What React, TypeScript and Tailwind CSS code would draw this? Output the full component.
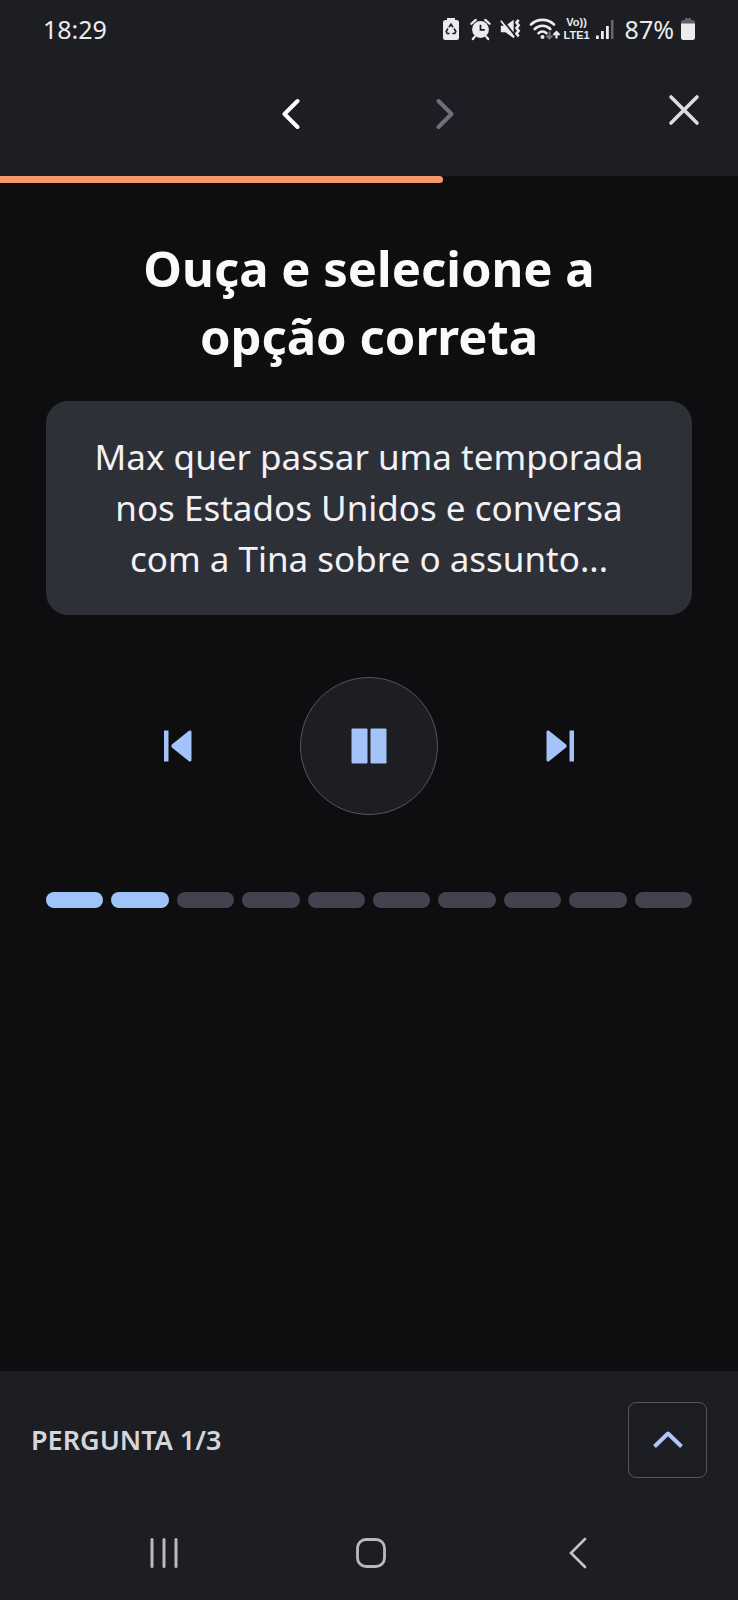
const SEGMENTS = 10;
const PLAYED = 2;

function StatusBar() {
  return (
    <div className="flex h-[58px] items-center justify-between pl-[43px] pr-[42px] text-[25px] leading-8 text-[#ececee]">
      <time>18:29</time>
      <div className="flex items-center">
        <svg className="h-6 w-[18px]" viewBox="0 0 18 24" aria-label="Economia de bateria">
          <path d="M5 1h8v3H5z" fill="#ececee" />
          <rect x="1" y="3" width="16" height="20" rx="2.500" fill="#ececee" />
          <path
            d="M7 10.200 9 7.200l2 3M12 11.500l1.800 3-1 2h-2.600M7.600 16.500H5.200l-1-2 1.700-3"
            fill="none"
            stroke="#1d1e23"
            strokeWidth="1.600"
          />
        </svg>
        <svg className="ml-2.5 h-6 w-[21px]" viewBox="0 0 22 24" aria-label="Alarme">
          <circle cx="11" cy="12.500" r="8.800" fill="#ececee" />
          <path d="M1.500 6.500 6 2.500M20.500 6.500 16 2.500M5 20l-2 2.500M17 20l2 2.500" stroke="#ececee" strokeWidth="2.400" strokeLinecap="round" />
          <path d="M11 7.500v5.500h4.500" fill="none" stroke="#1d1e23" strokeWidth="1.800" />
        </svg>
        <svg className="ml-2 h-6 w-[22px]" viewBox="0 0 24 24" aria-label="Vibrar">
          <path d="M2 8.500h5L16 2v20l-9-6.500H2z" fill="#ececee" />
          <path d="M3.500 1.500 18 20" stroke="#1d1e23" strokeWidth="2" />
          <path d="M2 3 16.500 21" stroke="#ececee" strokeWidth="2" />
          <path d="m21.500 2-2.500 3 2.500 3-2.500 3 2.500 3-2.500 3 2.500 3" fill="none" stroke="#ececee" strokeWidth="2.800" />
        </svg>
        <svg className="ml-2 h-6 w-8" viewBox="0 0 32 24" fill="none" aria-label="Wi-Fi">
          <path d="M2 7.500a16.500 16.500 0 0 1 23 0M5.700 12a11 11 0 0 1 15.600 0M9.500 16.200a6 6 0 0 1 8 0" stroke="#ececee" strokeWidth="2.600" strokeLinecap="round" />
          <circle cx="13.500" cy="20" r="2" fill="#ececee" />
          <path d="M20.500 14.500v7M17.500 18.500l3 3 3-3" stroke="#77787c" strokeWidth="1.800" />
          <path d="M27.500 21.500v-6M24.500 18l3-3 3 3" stroke="#ececee" strokeWidth="2.200" />
        </svg>
        <span className="ml-0.5 flex w-7 flex-col items-center font-['Liberation_Sans',sans-serif] text-[11px] font-bold leading-[13px]">
          <span>Vo))</span>
          <span>LTE1</span>
        </span>
        <svg className="ml-1 h-6 w-5" viewBox="0 0 20 24" aria-label="Sinal">
          <path d="M1 18.500h2.800V22H1zM6 14h2.800v8H6zM11 9h2.800v13H11z" fill="#ececee" />
          <path d="M16 3h2.500v19H16z" fill="#66676b" />
        </svg>
        <span className="ml-2.5">87%</span>
        <svg className="ml-1.5 h-6 w-4" viewBox="0 0 16 24" aria-label="Bateria">
          <path d="M5 1h6v2H5zM3 3h10a2 2 0 0 1 2 2v2H1V5a2 2 0 0 1 2-2z" fill="#606166" />
          <path d="M1 6.500h14v14a2.500 2.500 0 0 1-2.500 2.500h-9A2.500 2.500 0 0 1 1 20.500z" fill="#ececee" />
        </svg>
      </div>
    </div>
  );
}

function Header() {
  return (
    <header className="bg-[#1d1e23]">
      <StatusBar />
      <div className="grid h-[118px] grid-cols-[1fr_auto_1fr] items-start pt-5">
        <div />
        <nav className="flex gap-[90px] pt-1">
          <button aria-label="Anterior" className="flex size-16 items-center justify-center">
            <svg className="h-8 w-5" viewBox="0 0 20 32" fill="none">
              <path d="M15.500 3 2.500 16l13 13" stroke="#fff" strokeWidth="4" strokeLinecap="round" strokeLinejoin="round" />
            </svg>
          </button>
          <button aria-label="Próximo" disabled className="flex size-16 items-center justify-center">
            <svg className="h-8 w-5" viewBox="0 0 20 32" fill="none">
              <path d="m2.500 3 13 13-13 13" stroke="#706f82" strokeWidth="4" strokeLinecap="round" strokeLinejoin="round" />
            </svg>
          </button>
        </nav>
        <div className="flex justify-end pr-[22px]">
          <button aria-label="Fechar" className="flex size-16 items-center justify-center">
            <svg className="size-8" viewBox="0 0 32 32" fill="none">
              <path d="m3 3 26 26M29 3 3 29" stroke="#dddde1" strokeWidth="3.600" strokeLinecap="round" />
            </svg>
          </button>
        </div>
      </div>
    </header>
  );
}

function Player() {
  return (
    <>
      <div className="mt-[62px] flex items-center justify-between px-[100px]">
        <button aria-label="Trecho anterior" className="flex size-16 items-center justify-center">
          <svg className="h-8 w-7" viewBox="0 0 28 32" fill="#a3c3f9">
            <path d="M0 .500h4.500v31H0z" />
            <path d="M27.500 2v28a1.500 1.500 0 0 1-2.500 1.200L8.200 17.800a2.300 2.300 0 0 1 0-3.600L25 .800A1.500 1.500 0 0 1 27.500 2z" />
          </svg>
        </button>
        <button
          aria-label="Pausar"
          className="flex size-[138px] items-center justify-center rounded-full border border-[#55565e] bg-[#1d1e23]"
        >
          <svg className="h-9 w-9" viewBox="0 0 36 36" fill="#a3c3f9">
            <rect x="0.500" y="0.500" width="16" height="35" rx="1" />
            <rect x="19.500" y="0.500" width="16" height="35" rx="1" />
          </svg>
        </button>
        <button aria-label="Próximo trecho" className="flex size-16 items-center justify-center">
          <svg className="h-8 w-7" viewBox="0 0 28 32" fill="#a3c3f9">
            <path d="M23.500 .500H28v31h-4.500z" />
            <path d="M.500 2v28A1.500 1.500 0 0 0 3 31.200l16.800-13.400a2.300 2.300 0 0 0 0-3.600L3 .800A1.500 1.500 0 0 0 .500 2z" />
          </svg>
        </button>
      </div>
      <div
        role="progressbar"
        aria-label="Trechos ouvidos"
        aria-valuemin={0}
        aria-valuemax={SEGMENTS}
        aria-valuenow={PLAYED}
        className="mt-[77px] flex gap-2"
      >
        {Array.from({ length: SEGMENTS }, (_, i) => (
          <span key={i} className={`h-4 flex-1 rounded-full ${i < PLAYED ? "bg-[#9fc4fa]" : "bg-[#42434f]"}`} />
        ))}
      </div>
    </>
  );
}

function SystemNav() {
  return (
    <nav className="flex h-[94px] items-center justify-between pl-[120px] pr-[116px]">
      <button aria-label="Recentes" className="flex h-16 w-[88px] items-center justify-center">
        <svg className="h-8 w-8" viewBox="0 0 32 32">
          <path d="M4 2.500v27M16 2.500v27M28 2.500v27" stroke="#b9babd" strokeWidth="3" strokeLinecap="round" />
        </svg>
      </button>
      <button aria-label="Início" className="flex h-16 w-[88px] items-center justify-center">
        <svg className="h-8 w-8" viewBox="0 0 32 32" fill="none">
          <rect x="2.500" y="2.500" width="27" height="27" rx="8.500" stroke="#b9babd" strokeWidth="2.800" />
        </svg>
      </button>
      <button aria-label="Voltar" className="flex h-16 w-[88px] items-center justify-center">
        <svg className="h-8 w-5" viewBox="0 0 20 32" fill="none">
          <path d="M17 2 3 16l14 14" stroke="#c3c4c7" strokeWidth="2.600" strokeLinecap="round" />
        </svg>
      </button>
    </nav>
  );
}

export default function App() {
  return (
    <div className="flex min-h-screen flex-col bg-[#0e0e10] font-['Noto_Sans',sans-serif]">
      <Header />
      <div role="progressbar" aria-label="Progresso da lição" aria-valuenow={60} className="h-[7px]">
        <div className="h-full w-3/5 rounded-r-full bg-[#f8976c]" />
      </div>
      <main className="flex-1 px-[46px] pt-[51px]">
        <h1 className="mx-auto max-w-[500px] text-center text-[49px] font-bold leading-[68px] text-[#fafafc]">
          Ouça e selecione a opção correta
        </h1>
        <p className="mt-[31px] rounded-[22px] bg-[#2e3038] px-10 pb-[31px] pt-[30px] text-center text-[35px] leading-[51px] text-[#f2f2f5]">
          Max quer passar uma temporada nos Estados Unidos e conversa com a Tina sobre o assunto...
        </p>
        <Player />
      </main>
      <footer className="bg-[#1d1e23]">
        <div className="flex items-center justify-between px-[31px] pb-3 pt-[31px]">
          <h2 className="text-[27px] font-semibold leading-8 text-[#d5d5da]">PERGUNTA 1/3</h2>
          <button
            aria-label="Abrir pergunta"
            className="flex h-[76px] w-[79px] items-center justify-center rounded-lg border border-[#55565c]"
          >
            <svg className="h-5 w-8" viewBox="0 0 32 20" fill="none">
              <path d="M2.500 16.500 16 3.500l13.500 13" stroke="#afc8f9" strokeWidth="4" strokeLinejoin="round" />
            </svg>
          </button>
        </div>
        <div className="pt-4">
          <SystemNav />
        </div>
      </footer>
    </div>
  );
}
